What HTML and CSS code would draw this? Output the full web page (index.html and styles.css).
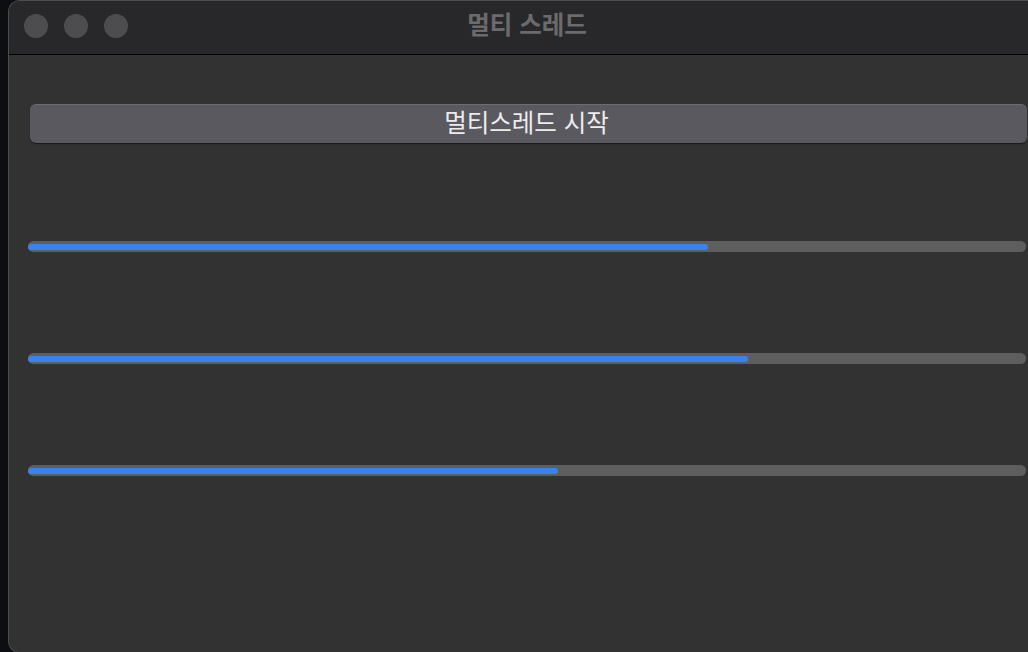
FILE: index.html
```html
<!DOCTYPE html>
<html lang="ko">
<head>
    <meta charset="UTF-8">
    <title>멀티 스레드</title>
    <link rel="stylesheet" href="styles.css">
</head>
<body>
    <div class="window">
        <div class="titlebar">
            <div class="lights">
                <span class="light"></span>
                <span class="light"></span>
                <span class="light"></span>
            </div>
            <div class="title">멀티 스레드</div>
        </div>
        <div class="content">
            <button class="start-btn">멀티스레드 시작</button>
            <div class="bars">
                <div class="track"><div class="fill" style="width: 68.1%"></div></div>
                <div class="track"><div class="fill" style="width: 72.1%"></div></div>
                <div class="track"><div class="fill" style="width: 53.1%"></div></div>
            </div>
        </div>
    </div>
</body>
</html>
```

FILE: styles.css
```css
html, body {
    margin: 0;
    padding: 0;
    background-color: #0c0e12;
    height: 652px;
    overflow: hidden;
    font-family: "Noto Sans CJK KR", "Noto Sans", sans-serif;
}

.window {
    margin-left: 8px;
    width: 1030px;
    height: 651px;
    background-color: #323232;
    border: 1px solid #4c4c4e;
    border-right: none;
    border-radius: 12px 0 0 12px;
    overflow: hidden;
}

.titlebar {
    position: relative;
    height: 53px;
    background-color: #28282a;
    border-bottom: 1px solid #000;
    display: flex;
    align-items: center;
    justify-content: center;
}

.lights {
    position: absolute;
    left: 15px;
    top: 13px;
    display: flex;
    gap: 16px;
}

.light {
    width: 24px;
    height: 24px;
    border-radius: 50%;
    background-color: #4d4d4f;
}

.title {
    color: #6b6b6d;
    font-size: 24.5px;
    font-weight: bold;
    margin-left: 6px;
    margin-top: -9px;
}

.content {
    padding: 49px 0 0 21px;
    width: 997px;
}

.start-btn {
    display: block;
    width: 997px;
    height: 39px;
    margin-left: 0;
    background-color: #5b5960;
    border: none;
    border-top: 1px solid #6e6c72;
    border-radius: 6px;
    box-shadow: 0 1px 1px rgba(0, 0, 0, 0.5);
    color: #ececec;
    font-family: "Noto Sans CJK KR", "Noto Sans", sans-serif;
    font-size: 24.5px;
    padding: 0 4px 5px 0;
    line-height: 30px;
}

.bars {
    margin-top: 98px;
    margin-left: -2px;
    display: flex;
    flex-direction: column;
    gap: 101px;
}

.track {
    width: 998px;
    height: 11px;
    background-color: #5e5e5e;
    border-radius: 6px;
    display: flex;
    align-items: center;
}

.fill {
    height: 6px;
    background-color: #3b82f0;
    border-radius: 4px;
}
```
